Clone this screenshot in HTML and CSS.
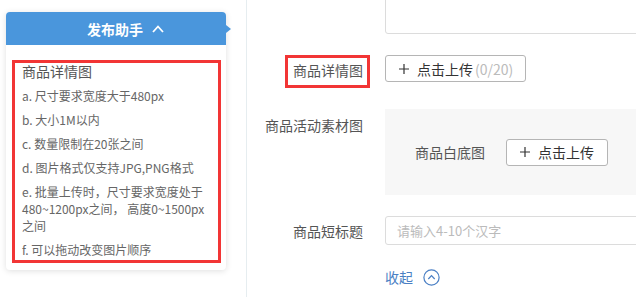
FILE: index.html
```html
<!DOCTYPE html>
<html lang="zh-CN">
  <head>
    <meta charset="UTF-8" />
    <title>商品发布</title>
    <link rel="stylesheet" href="styles.css">
  </head>
  <body>
    <div class="page">
      <!-- 发布助手 -->
      <aside class="side">
        <div class="helper">
          <div class="helper_head">
            <span>发布助手</span>
            <svg class="caret" width="12" height="8" viewBox="0 0 12 8">
              <path d="M1 7 L6 1.5 L11 7" fill="none" stroke="#fff" stroke-width="1.8" />
            </svg>
          </div>
          <div class="helper_body">
            <div class="tips">
              <h3>商品详情图</h3>
              <p>a. 尺寸要求宽度大于480px</p>
              <p>b. 大小1M以内</p>
              <p>c. 数量限制在20张之间</p>
              <p>d. 图片格式仅支持JPG,PNG格式</p>
              <p>e. 批量上传时，尺寸要求宽度处于480~1200px之间， 高度0~1500px之间</p>
              <p>f. 可以拖动改变图片顺序</p>
            </div>
          </div>
        </div>
      </aside>

      <!-- 表单 -->
      <main class="main">
        <div class="form">
          <div class="label"></div>
          <div class="textarea"></div>

          <div class="label label_top"><span class="marked">商品详情图</span></div>
          <div class="ctrl_top">
            <button class="upload">
              <svg width="10" height="10" viewBox="0 0 10 10"><path d="M5 0V10M0 5H10" stroke="#333" stroke-width="1.2" /></svg>
              点击上传 <span class="count">(0/20)</span>
            </button>
          </div>

          <div class="label label_pad">商品活动素材图</div>
          <div class="material">
            <span class="sub_label">商品白底图</span>
            <button class="upload">
              <svg width="10" height="10" viewBox="0 0 10 10"><path d="M5 0V10M0 5H10" stroke="#333" stroke-width="1.2" /></svg>
              点击上传
            </button>
          </div>

          <div class="label label_mid">商品短标题</div>
          <div class="input">请输入4-10个汉字</div>

          <div class="label"></div>
          <div class="fold">
            收起
            <svg width="17" height="17" viewBox="0 0 17 17">
              <circle cx="8.5" cy="8.5" r="7.6" fill="none" stroke="#4a7fc4" stroke-width="1.2" />
              <path d="M5.3 10 L8.5 6.6 L11.7 10" fill="none" stroke="#4a7fc4" stroke-width="1.2" />
            </svg>
          </div>
        </div>
      </main>
    </div>
  </body>
</html>
```

FILE: styles.css
```css
* {
  box-sizing: border-box;
  margin: 0;
  padding: 0;
}
body {
  overflow: hidden;
  height: 297px;
  font-family: "Noto Sans CJK SC", "Noto Sans", sans-serif;
  color: #555;
  background-color: #fff;
}
.page {
  display: flex;
  height: 297px;
}

/* 左侧 发布助手 */
.side {
  width: 246px;
  flex: none;
  padding: 12px 0 0 6px;
}
.helper {
  width: 220px;
  border-radius: 4px;
  background-color: #fff;
  box-shadow: 0 1px 6px rgba(0, 0, 0, 0.13);
}
.helper_head {
  position: relative;
  display: flex;
  align-items: center;
  justify-content: center;
  gap: 9px;
  height: 33px;
  padding-left: 19px;
  border-radius: 4px 4px 0 0;
  background-color: #4a96dc;
  color: #fff;
  font-size: 14px;
  font-weight: bold;
}
.helper_head::after {
  content: "";
  position: absolute;
  right: -5px;
  top: 13px;
  border-top: 4px solid transparent;
  border-bottom: 4px solid transparent;
  border-left: 5px solid #4a96dc;
}
.helper_body {
  padding: 15px 5px 7px 6px;
}
.tips {
  border: 3px solid #f23535;
  padding: 0 7px 2px;
}
.tips h3 {
  font-size: 14px;
  font-weight: normal;
  line-height: 16px;
  color: #555;
}
.tips p {
  margin-top: 7px;
  font-size: 12px;
  line-height: 17px;
  color: #666;
}
.tips h3 + p {
  margin-top: 8px;
}

/* 右侧 表单 */
.main {
  flex: 1;
  border-left: 1px solid #e6edf0;
}
.form {
  display: grid;
  grid-template-columns: 123px 400px;
  column-gap: 15px;
  row-gap: 21px;
  margin-top: -26px;
  font-size: 14px;
}
.label {
  text-align: right;
  padding-right: 7px;
  line-height: 16px;
  color: #555;
}
.label_top {
  padding-right: 0;
}
.label_pad {
  padding-top: 8px;
}
.label_mid {
  align-self: center;
}
.marked {
  display: inline-block;
  padding: 4px 4px 7px 5px;
  border: 3px solid #f23535;
}
.textarea {
  height: 60px;
  border: 1px solid #dcdcdc;
  border-radius: 3px;
}
.upload {
  display: inline-flex;
  align-items: center;
  gap: 8px;
  height: 27px;
  padding: 0 12px 0 13px;
  border: 1px solid #b5b5b5;
  border-radius: 3px;
  background-color: #fff;
  font-family: inherit;
  font-size: 14px;
  color: #333;
}
.count {
  margin-left: -6px;
  color: #bbb;
}
.material {
  display: flex;
  align-items: center;
  height: 86px;
  padding-left: 30px;
  background-color: #f7f7f7;
}
.sub_label {
  margin-right: 21px;
  color: #555;
}
.material .upload {
  padding-right: 13px;
}
.input {
  height: 29px;
  padding-left: 11px;
  border: 1px solid #dcdcdc;
  border-radius: 3px;
  font-size: 13px;
  line-height: 27px;
  color: #bbb;
}
.fold {
  display: flex;
  align-items: center;
  gap: 10px;
  height: 22px;
  color: #4a7fc4;
}
```
